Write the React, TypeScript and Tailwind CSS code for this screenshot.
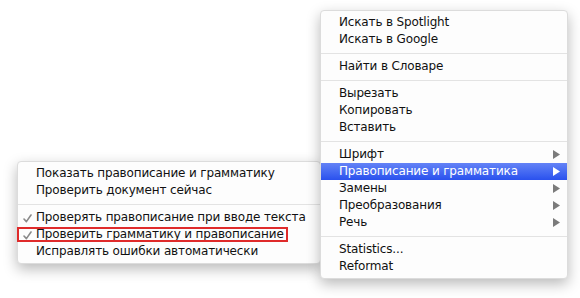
import React from "react";

type Entry = { label?: string; sub?: boolean; active?: boolean; checked?: boolean; sep?: boolean };

const mainItems: Entry[] = [
  { label: "Искать в Spotlight" },
  { label: "Искать в Google" },
  { sep: true },
  { label: "Найти в Словаре" },
  { sep: true },
  { label: "Вырезать" },
  { label: "Копировать" },
  { label: "Вставить" },
  { sep: true },
  { label: "Шрифт", sub: true },
  { label: "Правописание и грамматика", sub: true, active: true },
  { label: "Замены", sub: true },
  { label: "Преобразования", sub: true },
  { label: "Речь", sub: true },
  { sep: true },
  { label: "Statistics..." },
  { label: "Reformat" },
];

const subItems: Entry[] = [
  { label: "Показать правописание и грамматику" },
  { label: "Проверить документ сейчас" },
  { sep: true },
  { label: "Проверять правописание при вводе текста", checked: true },
  { label: "Проверить грамматику и правописание", checked: true },
  { label: "Исправлять ошибки автоматически" },
];

const Arrow = ({ white }: { white?: boolean }) => (
  <svg width="7" height="9" viewBox="0 0 7 9" className="absolute right-[7px] top-[4px]">
    <path d="M0 0 L7 4.5 L0 9 Z" fill={white ? "#ffffff" : "#7b7b7b"} />
  </svg>
);

const Check = () => (
  <svg width="9" height="9" viewBox="0 0 9 9" className="absolute left-[5px] top-[5px]">
    <path d="M1 5 L3.4 7.6 L8 1" fill="none" stroke="#8a8a8a" strokeWidth="1.6" strokeLinecap="round" strokeLinejoin="round" />
  </svg>
);

const Row = ({ item }: { item: Entry }) => {
  if (item.sep) {
    return (
      <div className="h-[10px] flex items-center">
        <div className="h-px w-full bg-[#e3e3e3]" />
      </div>
    );
  }
  return (
    <div
      className={`relative h-[17px] flex items-center pl-[18px] whitespace-nowrap ${
        item.active ? "bg-linear-to-b from-[#6482f6] to-[#2a50ee] text-white" : "text-[#111]"
      }`}
    >
      {item.checked && <Check />}
      {item.label}
      {item.sub && <Arrow white={item.active} />}
    </div>
  );
};

export default function App() {
  return (
    <div
      className="relative w-[580px] h-[298px] bg-white overflow-hidden text-[12px] leading-[17px] tracking-[-0.15px]"
      style={{ fontFamily: '"DejaVu Sans", "Noto Sans", sans-serif' }}
    >
      {/* submenu */}
      <div className="absolute left-[17px] top-[161px] w-[304px] py-[3px] bg-[#fdfdfd] rounded-[4px] border border-[#dcdcdc] shadow-[0_5px_14px_rgba(0,0,0,0.28)] z-0">
        {subItems.map((item, i) => (
          <Row key={i} item={item} />
        ))}
        <div className="absolute left-[-1px] top-[65px] w-[271px] h-[15px] border-2 border-[#df2b2b]" />
      </div>

      {/* main context menu */}
      <div className="absolute left-[320px] top-[10px] w-[248px] py-[3px] bg-[#fdfdfd] rounded-[4px] border border-[#dcdcdc] shadow-[0_5px_14px_rgba(0,0,0,0.28)] z-10">
        {mainItems.map((item, i) => (
          <Row key={i} item={item} />
        ))}
      </div>
    </div>
  );
}
